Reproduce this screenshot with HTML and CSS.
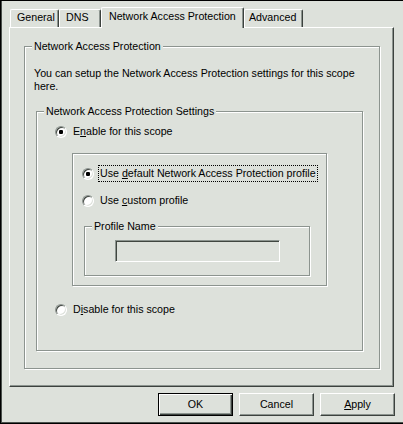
FILE: index.html
```html
<!DOCTYPE html>
<html>
<head>
<meta charset="utf-8">
<link rel="stylesheet" href="styles.css">
</head>
<body>
<div class="window">
  <div class="tabs">
    <div class="tab tab-general">General</div>
    <div class="tab tab-dns">DNS</div>
    <div class="tab tab-nap">Network Access Protection</div>
    <div class="tab tab-adv">Advanced</div>
  </div>
  <div class="panel">
    <fieldset class="group group-outer">
      <legend>Network Access Protection</legend>
      <p class="desc">You can setup the Network Access Protection settings for this scope here.</p>
      <fieldset class="group group-settings">
        <legend>Network Access Protection Settings</legend>
        <div class="row row-enable"><span class="radio on"></span><span class="label">E<u>n</u>able for this scope</span></div>
        <div class="etched profile-box">
          <div class="row"><span class="radio on"></span><span class="label focus">Use <u>d</u>efault Network Access Protection profile</span></div>
          <div class="row row-custom"><span class="radio"></span><span class="label">Use <u>c</u>ustom profile</span></div>
          <fieldset class="group group-profile">
            <legend>Profile Name</legend>
            <div class="input"></div>
          </fieldset>
        </div>
        <div class="row row-disable"><span class="radio"></span><span class="label">D<u>i</u>sable for this scope</span></div>
      </fieldset>
    </fieldset>
  </div>
  <div class="buttons">
    <button class="btn btn-default">OK</button>
    <button class="btn">Cancel</button>
    <button class="btn"><u>A</u>pply</button>
  </div>
</div>
</body>
</html>
```
FILE: styles.css
```css
* { box-sizing: border-box; }

body {
  margin: 0;
  font-family: "Liberation Sans", Arial, sans-serif;
  font-size: 8pt;
  line-height: 13px;
  color: #000;
  background: #dde1db;
}

.window {
  width: 403px;
  height: 424px;
  border-left: 1px solid #000;
  border-top: 1px solid #000;
  border-bottom: 1px solid #000;
  box-shadow: inset 1px 0 #4a504c, inset 0 -1px #4a504c;
  background: #dde1db;
  display: flex;
  flex-direction: column;
}

.tabs {
  display: flex;
  align-items: flex-end;
  height: 20px;
  margin: 6px 0 0 9px;
}

.tab {
  height: 18px;
  padding: 1px 0 0 6px;
  border-top: 1px solid #fff;
  border-left: 1px solid #fff;
  border-right: 1px solid #3c423e;
  box-shadow: inset -1px 0 #8c948f;
  border-radius: 2px 2px 0 0;
  white-space: nowrap;
  background: #dde1db;
}

.tab-general { width: 49px; }
.tab-dns { width: 42px; }
.tab-nap {
  width: 143px;
  height: 21px;
  margin-bottom: -1px;
  padding: 2px 0 0 7px;
  position: relative;
  z-index: 1;
}
.tab-adv { width: 59px; padding-left: 4px; }

.panel {
  margin-left: 8px;
  width: 385px;
  height: 360px;
  border-top: 1px solid #fff;
  border-left: 1px solid #fff;
  border-right: 1px solid #3c423e;
  border-bottom: 1px solid #3c423e;
  box-shadow: inset -1px -1px #8c948f;
  padding: 12px 0 0 14px;
}

.group {
  margin: 0;
  padding: 0;
  min-width: 0;
  border: 1px solid #8c948f;
  box-shadow: inset 1px 1px #fff, 1px 1px #fff;
}

.group legend {
  margin-left: 7px;
  padding: 0 2px;
  line-height: 13px;
  background: #dde1db;
}

.group-outer { width: 356px; height: 329px; }

.desc {
  margin: 14px 0 0;
  padding: 0 9px;
}

.group-settings {
  width: 327px;
  height: 246px;
  margin: 12px 0 0 11px;
}

.row {
  display: flex;
  align-items: center;
  height: 17px;
  gap: 4px;
  white-space: nowrap;
}

.row-enable { margin-top: 5px; padding-left: 18px; }
.row-custom { margin-top: 10px; }
.row-disable { margin-top: 15px; padding-left: 18px; }

.label {
  padding: 1px;
  border: 1px dotted transparent;
}
.label.focus { border-color: #000; }

.radio {
  flex: none;
  width: 12px;
  height: 12px;
  border-radius: 50%;
  border: 1px solid;
  border-color: #8c948f #fff #fff #8c948f;
  box-shadow: inset 1px 1px #404640, inset -1px -1px #dde1db;
  background: #fff;
}
.radio.on {
  background: radial-gradient(circle at 50% 50%, #000 0, #000 2px, #fff 2.4px);
}

.etched {
  border: 1px solid #8c948f;
  box-shadow: inset 1px 1px #fff, 1px 1px #fff;
}

.profile-box {
  width: 255px;
  height: 133px;
  margin: 13px 0 0 35px;
  padding: 11px 0 0 9px;
}

.group-profile {
  width: 226px;
  height: 56px;
  margin: 11px 0 0 2px;
}

.input {
  width: 165px;
  height: 22px;
  margin: 7px 0 0 30px;
  border: 1px solid;
  border-color: #8c948f #fff #fff #8c948f;
  box-shadow: inset 1px 1px #404640, inset -1px -1px #dde1db;
  background: #dde1db;
}

.buttons {
  display: flex;
  justify-content: flex-end;
  gap: 6px;
  margin-top: 6px;
  padding-right: 8px;
}

.btn {
  width: 75px;
  height: 23px;
  padding: 0;
  font: inherit;
  line-height: 13px;
  color: #000;
  background: #dde1db;
  border: 1px solid;
  border-color: #fff #3c423e #3c423e #fff;
  box-shadow: inset -1px -1px #8c948f;
}

.btn-default {
  border-color: #000;
  box-shadow: inset 1px 1px #fff, inset -1px -1px #3c423e, inset -2px -2px #8c948f;
}
```
